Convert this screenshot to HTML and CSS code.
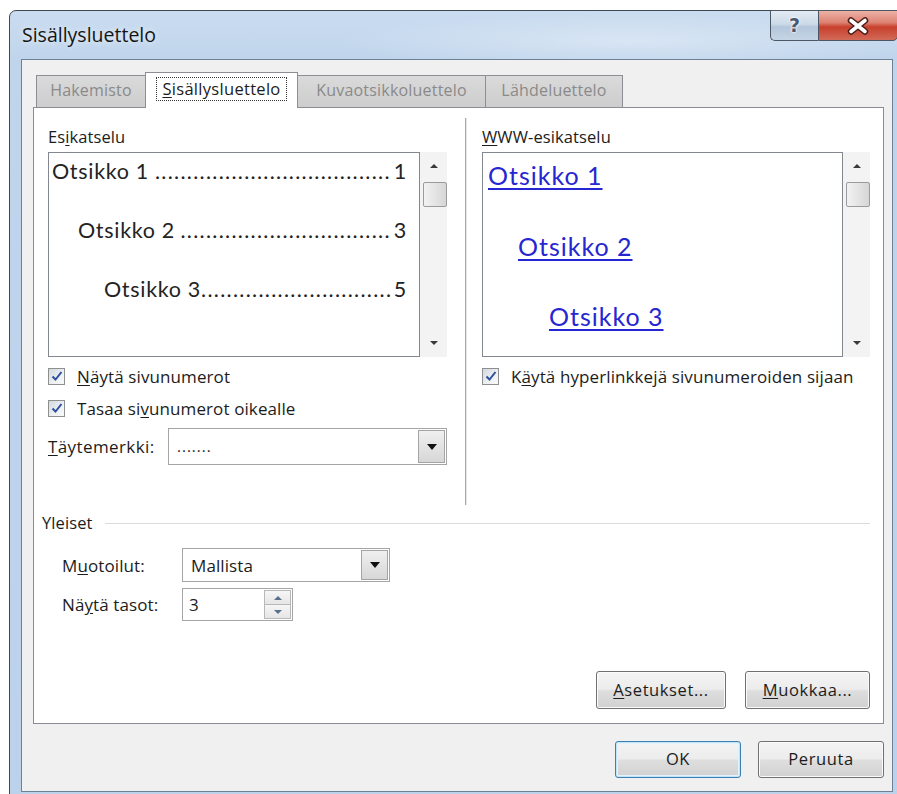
FILE: index.html
```html
<!DOCTYPE html>
<html lang="fi">
<head>
<meta charset="utf-8">
<title>Sisällysluettelo</title>
<link rel="stylesheet" href="styles.css">
</head>
<body>
<div class="window">
  <div class="titlebar">
    <div class="title">Sisällysluettelo</div>
    <div class="caption-buttons">
      <div class="cap-btn help"><span class="help-glyph">?</span></div>
      <div class="cap-btn close">
        <svg class="close-x" width="26" height="18" viewBox="0 0 26 18">
          <path d="M6 3.5 L20 14.5 M20 3.5 L6 14.5" stroke="#4a1c16" stroke-width="6.5" stroke-linecap="round"/>
          <path d="M6 3.5 L20 14.5 M20 3.5 L6 14.5" stroke="#ffffff" stroke-width="3.6" stroke-linecap="round"/>
        </svg>
      </div>
    </div>
  </div>

  <div class="client">
    <div class="tabs">
      <div class="tab tab-index">Hakemisto</div>
      <div class="tab tab-toc active"><span class="focus"><u>S</u>isällysluettelo</span></div>
      <div class="tab tab-figures">Kuvaotsikkoluettelo</div>
      <div class="tab tab-sources">Lähdeluettelo</div>
    </div>

    <div class="panel">
      <div class="top">
        <div class="col col-left">
          <div class="label">Es<u>i</u>katselu</div>
          <div class="listbox">
            <div class="preview print">
              <div class="toc-line lvl1"><span class="toc-title">Otsikko 1</span><span class="dots">.....................................</span><span class="toc-num">1</span></div>
              <div class="toc-line lvl2"><span class="toc-title">Otsikko 2</span><span class="dots">.................................</span><span class="toc-num">3</span></div>
              <div class="toc-line lvl3"><span class="toc-title tight">Otsikko 3</span><span class="dots">..............................</span><span class="toc-num">5</span></div>
            </div>
            <div class="vscroll">
              <div class="arrow-btn"><span class="tri-up"></span></div>
              <div class="thumb"></div>
              <div class="track"></div>
              <div class="arrow-btn"><span class="tri-down"></span></div>
            </div>
          </div>

          <div class="check first"><span class="box"><svg width="14" height="14" viewBox="0 0 14 14"><path d="M2.5 7.5 L5.5 10.5 L11.5 3" fill="none" stroke="#2c4f9f" stroke-width="2"/></svg></span><span class="check-text"><u>N</u>äytä sivunumerot</span></div>
          <div class="check"><span class="box"><svg width="14" height="14" viewBox="0 0 14 14"><path d="M2.5 7.5 L5.5 10.5 L11.5 3" fill="none" stroke="#2c4f9f" stroke-width="2"/></svg></span><span class="check-text">Tasaa si<u>v</u>unumerot oikealle</span></div>

          <div class="field-row">
            <span class="field-label"><u>T</u>äytemerkki:</span>
            <div class="combo combo-leader">
              <span class="combo-value">.......</span>
              <span class="combo-btn"><span class="tri-down dark"></span></span>
            </div>
          </div>
        </div>

        <div class="divider"></div>

        <div class="col col-right">
          <div class="label"><u>W</u>WW-esikatselu</div>
          <div class="listbox">
            <div class="preview web">
              <div class="web-line lvl1"><a>Otsikko 1</a></div>
              <div class="web-line lvl2"><a>Otsikko 2</a></div>
              <div class="web-line lvl3"><a>Otsikko 3</a></div>
            </div>
            <div class="vscroll">
              <div class="arrow-btn"><span class="tri-up"></span></div>
              <div class="thumb"></div>
              <div class="track"></div>
              <div class="arrow-btn"><span class="tri-down"></span></div>
            </div>
          </div>
          <div class="check first"><span class="box"><svg width="14" height="14" viewBox="0 0 14 14"><path d="M2.5 7.5 L5.5 10.5 L11.5 3" fill="none" stroke="#2c4f9f" stroke-width="2"/></svg></span><span class="check-text">K<u>ä</u>ytä hyperlinkkejä sivunumeroiden sijaan</span></div>
        </div>
      </div>

      <div class="general">
        <div class="group-head"><span>Yleiset</span><span class="group-line"></span></div>
        <div class="general-grid">
          <span class="field-label">M<u>u</u>otoilut:</span>
          <div class="combo combo-format">
            <span class="combo-value">Mallista</span>
            <span class="combo-btn"><span class="tri-down dark"></span></span>
          </div>
          <span class="field-label">Nä<u>y</u>tä tasot:</span>
          <div class="spin">
            <span class="spin-value">3</span>
            <span class="spin-btns">
              <span class="spin-btn"><span class="tri-up small"></span></span>
              <span class="spin-btn"><span class="tri-down small"></span></span>
            </span>
          </div>
        </div>
      </div>

      <div class="panel-actions">
        <button class="btn btn-options"><u>A</u>setukset...</button>
        <button class="btn btn-modify"><u>M</u>uokkaa...</button>
      </div>
    </div>

    <div class="dialog-actions">
      <button class="btn btn-ok default">OK</button>
      <button class="btn btn-cancel">Peruuta</button>
    </div>
  </div>
</div>
</body>
</html>
```

FILE: styles.css
```css
* { box-sizing: border-box; }

html, body { margin: 0; padding: 0; }

body {
  width: 897px;
  height: 794px;
  overflow: hidden;
  background: #ffffff;
  font-family: "Open Sans", "Noto Sans", sans-serif;
  font-size: 17px;
  letter-spacing: 0.1px;
  color: #1c1c1c;
}

u { text-decoration: underline; text-underline-offset: 2px; }

/* ---------- window frame ---------- */
.window {
  margin: 10px 0 0 9px;
  width: 896px;
  height: 800px;
  border: 1px solid #3f4753;
  border-radius: 7px 7px 0 0;
  padding: 0 11px 0 11px;
  display: flex;
  flex-direction: column;
  background:
    radial-gradient(ellipse 420px 40px at 620px 30px, rgba(255,255,255,0.35), rgba(255,255,255,0) 70%),
    linear-gradient(180deg, #cadcf0 0px, #c0d5ec 48px, #bcd2ea 100%);
}

.titlebar {
  height: 48px;
  margin: 0 -11px;
  display: flex;
  justify-content: space-between;
  align-items: flex-start;
  flex: none;
}

.title {
  padding: 11px 0 0 12px;
  font-size: 19.5px;
  line-height: 26px;
  letter-spacing: 0;
  color: #151515;
  text-shadow: 0 0 6px rgba(255,255,255,0.9);
}

.caption-buttons {
  display: flex;
  margin-right: 6px;
}

.cap-btn {
  height: 31px;
  margin-top: -1px;
  border: 1px solid #4d5663;
  display: flex;
  align-items: center;
  justify-content: center;
}

.help {
  width: 48px;
  border-right: none;
  border-radius: 0 0 0 5px;
  background: linear-gradient(180deg, #e3ebf4 0%, #ccd9e8 45%, #b4c6db 55%, #c6d5e6 100%);
}

.help-glyph {
  font-family: "DejaVu Sans", sans-serif;
  font-size: 19px;
  font-weight: bold;
  color: #4a5a70;
  text-shadow: 0 0 1px #fff, 0 0 2px #fff, 0 0 3px #fff;
  line-height: 1;
}

.close {
  width: 80px;
  border-radius: 0 0 5px 0;
  background: linear-gradient(180deg, #ebb2a6 0%, #dd8272 40%, #c7402d 55%, #d26a58 100%);
}

.close-x { display: block; }

/* ---------- client area ---------- */
.client {
  border: 1px solid #6e8095;
  background: #f0f0f0;
  padding: 12px 0 13px 11px;
  flex: none;
}

.tabs {
  height: 36px;
  margin-bottom: -1px;
  padding-left: 3px;
  display: flex;
  align-items: flex-end;
  position: relative;
  z-index: 1;
}

.tab {
  height: 33px;
  border: 1px solid #8c8e94;
  background: linear-gradient(180deg, #dadada 0%, #cdcdcd 100%);
  color: #8a8a8a;
  font-size: 16px;
  letter-spacing: 0.2px;
  display: flex;
  align-items: center;
  justify-content: center;
  padding-bottom: 3px;
}

.tab + .tab { margin-left: -1px; }

.tab-index { width: 110px; }
.tab-toc { width: 153px; }
.tab-figures { width: 189px; }
.tab-sources { width: 138px; }

.tab.active {
  height: 36px;
  background: #ffffff;
  border-bottom: none;
  color: #1c1c1c;
  padding-bottom: 4px;
}

.focus {
  border: 1px dotted #333;
  padding: 0 5px 1px 5px;
  line-height: 21px;
  font-size: 16.5px;
  letter-spacing: 0.3px;
}

.panel {
  width: 851px;
  height: 617px;
  border: 1px solid #898c95;
  background: #ffffff;
  display: flex;
  flex-direction: column;
  padding: 0 13px 14px 0;
}

/* ---------- top: previews ---------- */
.top {
  margin-top: 10px;
  height: 387px;
  padding-left: 14px;
  display: flex;
  flex: none;
}

.col { padding-top: 10px; }
.col-left { width: 399px; }
.col-right { width: 388px; }

.divider {
  width: 1px;
  margin: 0 16px 0 18px;
  background: #a9a9a9;
  box-shadow: 1px 0 0 #e6e6e6;
}

.label {
  height: 18px;
  line-height: 18px;
  margin-bottom: 6px;
  font-size: 16.5px;
}

.listbox {
  height: 205px;
  display: flex;
}

.preview {
  flex: 1;
  border: 1px solid #828790;
  background: #fff;
  overflow: hidden;
}

.vscroll {
  width: 27px;
  background: #f3f3f3;
  display: flex;
  flex-direction: column;
  align-items: center;
}

.arrow-btn {
  height: 28px;
  width: 100%;
  display: flex;
  align-items: center;
  justify-content: center;
}

.thumb {
  width: 24px;
  height: 25px;
  margin: 2px 0 0 3px;
  border: 1px solid #9b9b9b;
  border-radius: 2px;
  background: linear-gradient(90deg, #f2f2f2 0%, #e4e4e4 50%, #d6d6d6 100%);
}

.track { flex: 1; }

.tri-up, .tri-down {
  width: 0;
  height: 0;
  border-left: 4px solid transparent;
  border-right: 4px solid transparent;
}
.tri-up { border-bottom: 4px solid #3a3a3a; }
.tri-down { border-top: 4px solid #3a3a3a; }

.tri-down.dark {
  border-left-width: 5px;
  border-right-width: 5px;
  border-top: 6px solid #111;
}

.tri-up.small, .tri-down.small {
  border-left-width: 4px;
  border-right-width: 4px;
}
.tri-up.small { border-bottom: 4px solid #5a6f8a; }
.tri-down.small { border-top: 4px solid #5a6f8a; }

/* print preview */
.print {
  padding: 3px 12px 0 3px;
  font-family: "Lato", "Open Sans", sans-serif;
  font-size: 21.5px;
  letter-spacing: 0.7px;
  color: #232323;
}

.toc-line {
  display: flex;
  height: 30px;
  line-height: 30px;
  margin-bottom: 29px;
  white-space: nowrap;
}

.toc-title { margin-right: 5px; }
.toc-title.tight { margin-right: 0; }

.toc-line.lvl2 { padding-left: 26px; }
.toc-line.lvl3 { padding-left: 52px; }

.dots {
  flex: 1;
  min-width: 0;
  overflow: hidden;
  text-align: right;
  letter-spacing: 1.3px;
  padding-right: 3px;
}

/* web preview */
.web {
  padding: 6px 0 0 5px;
  font-family: "Lato", "Open Sans", sans-serif;
  font-size: 25px;
  letter-spacing: 1px;
}

.web-line {
  height: 32px;
  line-height: 32px;
  margin-bottom: 38.5px;
}

.web-line a {
  color: #2626d2;
  text-decoration: underline;
  text-underline-offset: 3px;
  text-decoration-thickness: 2px;
}

.web-line.lvl2 { padding-left: 30px; }
.web-line.lvl3 { padding-left: 61px; }

/* checkboxes */
.check {
  height: 32px;
  display: flex;
  align-items: center;
}

.check.first { margin-top: 3px; }

.box {
  width: 17px;
  height: 17px;
  border: 1px solid #8e8f8f;
  background: linear-gradient(135deg, #d3d8df 0%, #eef1f4 60%, #f8f8f8 100%);
  display: flex;
  align-items: center;
  justify-content: center;
  margin-right: 12px;
  flex: none;
}

.box svg { display: block; }

/* fields */
.field-row {
  margin-top: 4px;
  display: flex;
  align-items: center;
}

.field-row .field-label { width: 120px; letter-spacing: 0.4px; }

.combo {
  height: 37px;
  border: 1px solid #a5a5a5;
  background: #fff;
  display: flex;
  align-items: stretch;
}

.combo-leader { flex: 1; }

.combo-value {
  flex: 1;
  padding-left: 8px;
  display: flex;
  align-items: center;
}

.combo-leader .combo-value { font-size: 15px; letter-spacing: 1px; padding-bottom: 2px; }

.combo-btn {
  width: 27px;
  margin: 1px;
  border: 1px solid #a4a4a4;
  background: linear-gradient(180deg, #f0f0f0 0%, #e3e3e3 50%, #d7d7d7 100%);
  display: flex;
  align-items: center;
  justify-content: center;
}

/* ---------- general group ---------- */
.general {
  padding-left: 8px;
  flex: none;
}

.group-head {
  margin-top: 9px;
  height: 18px;
  line-height: 18px;
  display: flex;
  align-items: center;
  font-size: 16.5px;
}

.group-line {
  flex: 1;
  height: 1px;
  margin-left: 12px;
  background: #dcdcdc;
}

.general-grid {
  margin-top: 16px;
  padding-left: 20px;
  display: grid;
  grid-template-columns: 120px auto;
  row-gap: 6px;
  align-items: center;
  justify-items: start;
}

.combo-format {
  width: 208px;
  height: 34px;
}

.spin {
  width: 111px;
  height: 33px;
  border: 1px solid #a5a5a5;
  background: #fff;
  display: flex;
}

.spin-value {
  flex: 1;
  padding-left: 6px;
  display: flex;
  align-items: center;
}

.spin-btns {
  width: 27px;
  margin: 1px;
  display: flex;
  flex-direction: column;
}

.spin-btn {
  flex: 1;
  border: 1px solid #b8b8b8;
  background: linear-gradient(180deg, #f6f6f6 0%, #e6e6e6 100%);
  display: flex;
  align-items: center;
  justify-content: center;
}

.spin-btn + .spin-btn { border-top: none; }

/* ---------- buttons ---------- */
.panel-actions {
  margin-top: auto;
  display: flex;
  justify-content: flex-end;
  gap: 19px;
}

.dialog-actions {
  width: 851px;
  margin-top: 17px;
  display: flex;
  justify-content: flex-end;
  gap: 17px;
}

.btn {
  height: 37px;
  border: 1px solid #707070;
  border-radius: 3px;
  background: linear-gradient(180deg, #f4f4f4 0%, #ececec 48%, #dedede 52%, #d1d1d1 100%);
  box-shadow: inset 0 0 0 1px #fbfbfb;
  font-family: "Open Sans", "Noto Sans", sans-serif;
  font-size: 16.5px;
  letter-spacing: 0.6px;
  color: #1c1c1c;
  padding: 0 0 2px 0;
}

.btn-options { width: 130px; height: 38px; }
.btn-modify { width: 125px; height: 38px; }
.btn-ok, .btn-cancel { width: 126px; }

.btn.default {
  border-color: #3c7fb1;
  box-shadow: inset 0 0 0 1px #c3e4f6, inset 0 0 0 2px #e3f2fb;
}
```
